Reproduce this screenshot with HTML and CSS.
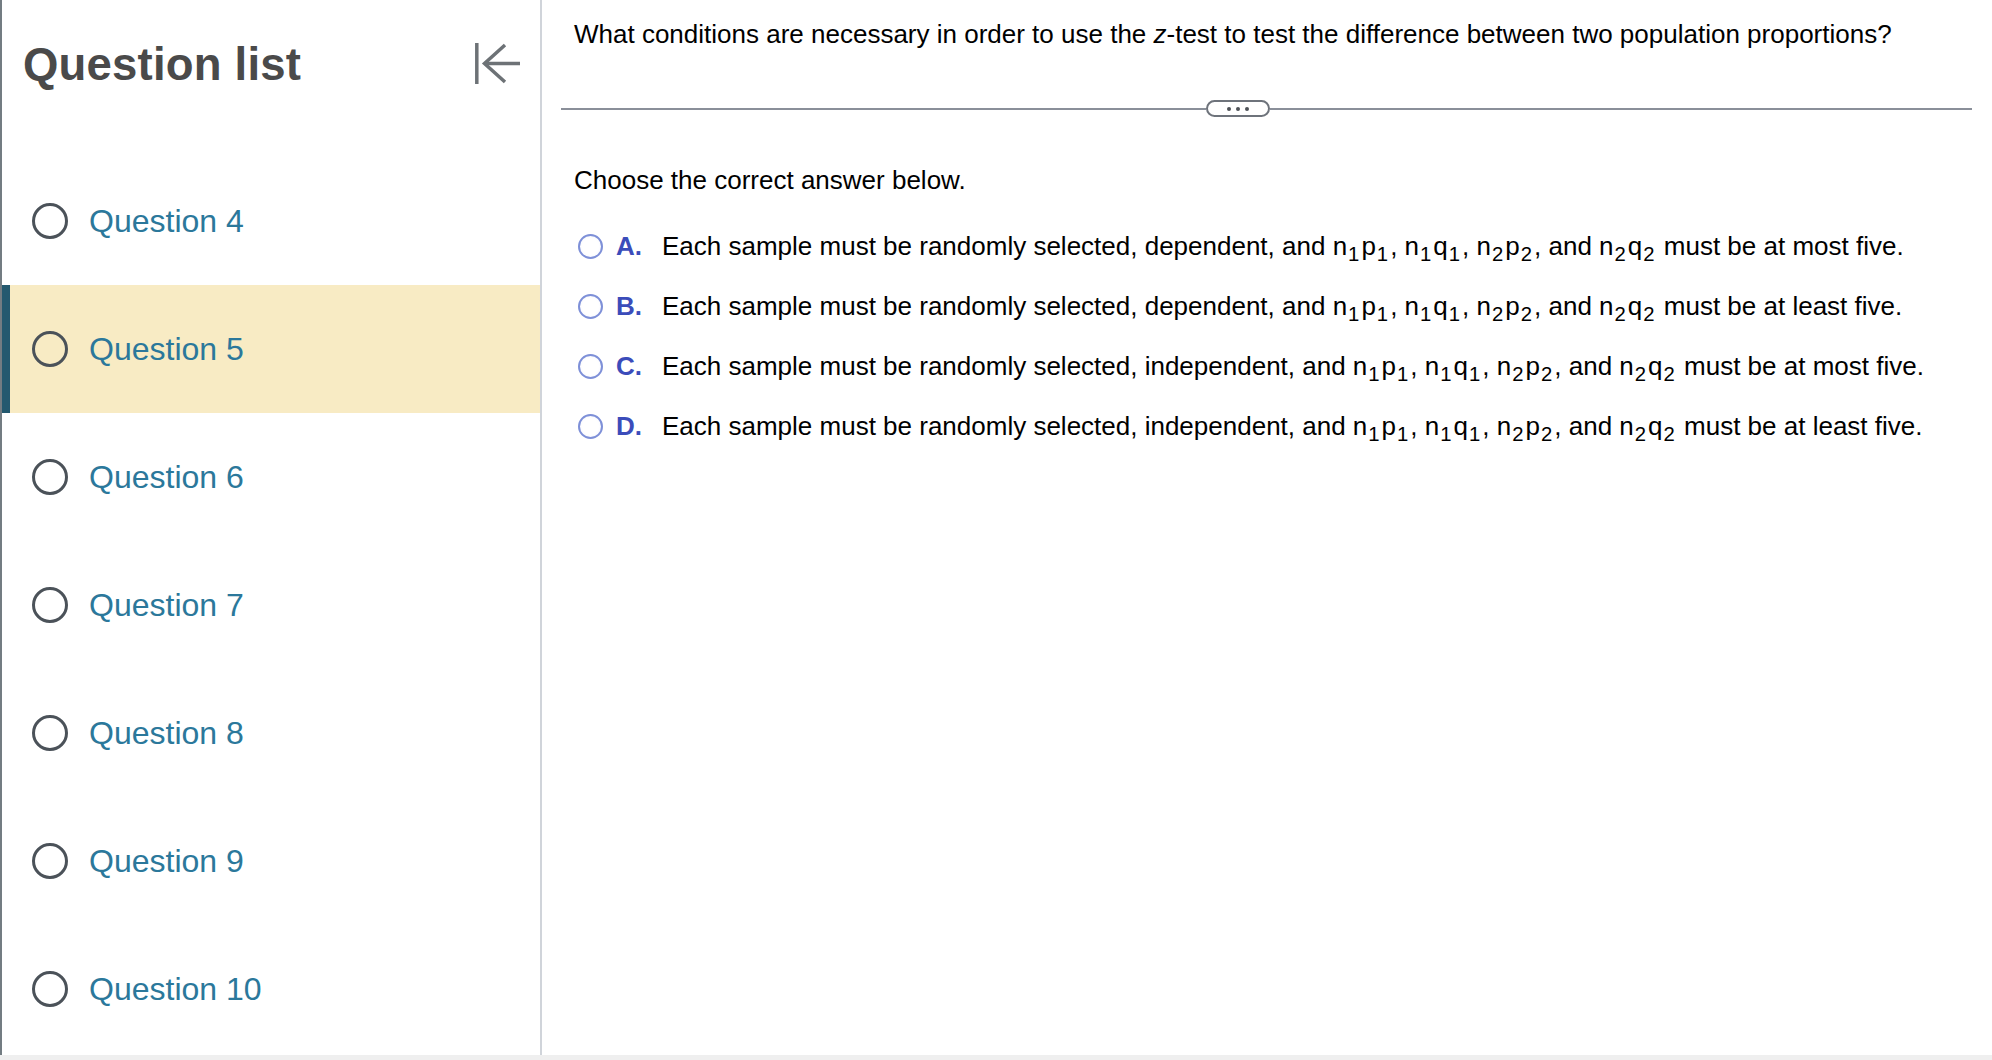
FILE: index.html
```html
<!DOCTYPE html>
<html>
<head>
  <meta charset="UTF-8" />
  <title>Question list</title>
  <link rel="stylesheet" href="styles.css">
</head>
<body>
  <div class="app">
    <div class="sidebar">
      <div class="sidebar-header">
        <h1>Question list</h1>
        <button class="collapse-btn" aria-label="Collapse">
          <svg width="46" height="41" viewBox="0 0 46 41">
            <line x1="1.8" y1="0" x2="1.8" y2="41" />
            <path d="M30 2 L9.5 20.5 L30 39" />
            <line x1="9.5" y1="20.5" x2="45" y2="20.5" />
          </svg>
        </button>
      </div>
      <ul class="question-list">
        <li class="question-item"><span class="q-radio"></span>Question 4</li>
        <li class="question-item active"><span class="q-radio"></span>Question 5</li>
        <li class="question-item"><span class="q-radio"></span>Question 6</li>
        <li class="question-item"><span class="q-radio"></span>Question 7</li>
        <li class="question-item"><span class="q-radio"></span>Question 8</li>
        <li class="question-item"><span class="q-radio"></span>Question 9</li>
        <li class="question-item"><span class="q-radio"></span>Question 10</li>
      </ul>
    </div>

    <div class="main">
      <p class="question">What conditions are necessary in order to use the <i>z</i>-test to test the difference between two population proportions?</p>

      <div class="divider">
        <span class="divider-left"></span>
        <span class="more-pill"><span></span><span></span><span></span></span>
        <span class="divider-right"></span>
      </div>

      <p class="prompt">Choose the correct answer below.</p>

      <div class="choices">
        <label class="choice">
          <span class="c-radio"></span>
          <span class="c-letter">A.</span>
          <span class="c-text">Each sample must be randomly selected, dependent, and n<sub>1</sub>p<sub>1</sub>, n<sub>1</sub>q<sub>1</sub>, n<sub>2</sub>p<sub>2</sub>, and n<sub>2</sub>q<sub>2</sub> must be at most five.</span>
        </label>
        <label class="choice">
          <span class="c-radio"></span>
          <span class="c-letter">B.</span>
          <span class="c-text">Each sample must be randomly selected, dependent, and n<sub>1</sub>p<sub>1</sub>, n<sub>1</sub>q<sub>1</sub>, n<sub>2</sub>p<sub>2</sub>, and n<sub>2</sub>q<sub>2</sub> must be at least five.</span>
        </label>
        <label class="choice">
          <span class="c-radio"></span>
          <span class="c-letter">C.</span>
          <span class="c-text">Each sample must be randomly selected, independent, and n<sub>1</sub>p<sub>1</sub>, n<sub>1</sub>q<sub>1</sub>, n<sub>2</sub>p<sub>2</sub>, and n<sub>2</sub>q<sub>2</sub> must be at most five.</span>
        </label>
        <label class="choice">
          <span class="c-radio"></span>
          <span class="c-letter">D.</span>
          <span class="c-text">Each sample must be randomly selected, independent, and n<sub>1</sub>p<sub>1</sub>, n<sub>1</sub>q<sub>1</sub>, n<sub>2</sub>p<sub>2</sub>, and n<sub>2</sub>q<sub>2</sub> must be at least five.</span>
        </label>
      </div>
    </div>
  </div>
</body>
</html>
```

FILE: styles.css
```css
:root {
  --title-color: #4a4a4a;
  --link-color: #2b789b;
  --active-bg: #f8ebc4;
  --active-bar: #24596f;
  --side-border: #d0d4da;
  --choice-blue: #3b4cba;
}

* {
  margin: 0;
  padding: 0;
  box-sizing: border-box;
}

body {
  font-family: "Liberation Sans", Arial, sans-serif;
  background-color: #efefef;
  color: #000;
}

.app {
  display: flex;
  height: 1055px;
  background-color: #fff;
}

.sidebar {
  width: 542px;
  flex-shrink: 0;
  border-left: 2px solid #737c82;
  border-right: 2px solid var(--side-border);
  display: flex;
  flex-direction: column;
}

.sidebar-header {
  height: 157px;
  display: flex;
  align-items: flex-start;
  justify-content: space-between;
  padding: 38px 19px 0 21px;
}

.sidebar-header h1 {
  font-size: 45.5px;
  font-weight: bold;
  line-height: 53px;
  letter-spacing: 0.2px;
  color: var(--title-color);
}

.collapse-btn {
  border: none;
  background: none;
  margin-top: 5px;
  cursor: pointer;
}

.collapse-btn svg {
  display: block;
  fill: none;
  stroke: #6d7276;
  stroke-width: 3.5;
}

.question-list {
  list-style: none;
}

.question-item {
  height: 128px;
  display: flex;
  align-items: center;
  gap: 21px;
  padding-left: 22px;
  border-left: 8px solid transparent;
  font-size: 32px;
  color: var(--link-color);
  cursor: pointer;
}

.question-item.active {
  background-color: var(--active-bg);
  border-left-color: var(--active-bar);
}

.q-radio {
  width: 36px;
  height: 36px;
  border-radius: 50%;
  border: 3.5px solid #4b5259;
  flex-shrink: 0;
}

.main {
  flex: 1;
  padding: 19px 20px 0 32px;
}

.question {
  font-size: 26px;
  line-height: 30px;
}

.divider {
  display: flex;
  align-items: center;
  height: 17px;
  margin: 51px 0 48px -13px;
}

.divider-left {
  width: 645px;
  border-top: 2px solid #8a8f99;
}

.divider-right {
  flex: 1;
  border-top: 2px solid #8a8f99;
}

.more-pill {
  width: 64px;
  height: 17px;
  border: 2px solid #6e737b;
  border-radius: 9px;
  display: flex;
  align-items: center;
  justify-content: center;
  gap: 5px;
}

.more-pill span {
  width: 4px;
  height: 4px;
  border-radius: 50%;
  background-color: #4d5157;
}

.prompt {
  font-size: 26px;
  line-height: 30px;
}

.choices {
  margin-top: 21px;
  display: flex;
  flex-direction: column;
}

.choice {
  height: 60px;
  display: flex;
  align-items: center;
  font-size: 26px;
  line-height: 30px;
  cursor: pointer;
}

.c-radio {
  width: 25px;
  height: 25px;
  margin-left: 4px;
  margin-right: 13px;
  border-radius: 50%;
  border: 2px solid #7e90d8;
  background: radial-gradient(circle, #fff 55%, #eef0fa 100%);
  flex-shrink: 0;
}

.c-letter {
  width: 46px;
  font-weight: bold;
  color: var(--choice-blue);
}

.c-text sub {
  font-size: 78%;
  vertical-align: -0.3em;
  line-height: 0;
  padding: 0 2px 0 1px;
}
```
